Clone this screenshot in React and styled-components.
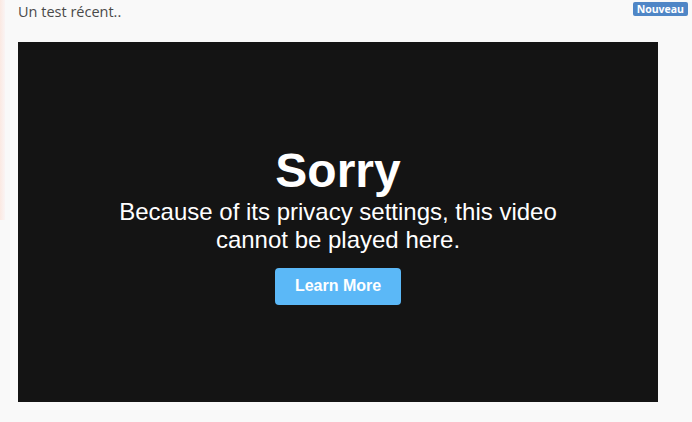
import React from 'react';
import styled, { createGlobalStyle } from 'styled-components';

const GlobalStyle = createGlobalStyle`
  html, body {
    margin: 0;
    padding: 0;
    background: #f9f9f9;
  }
`;

const Page = styled.div`
  position: relative;
  width: 692px;
  height: 422px;
  overflow: hidden;
  background: #f9f9f9;
  font-family: 'Open Sans', 'Liberation Sans', sans-serif;
`;

const EdgeGlow = styled.div`
  position: absolute;
  left: 0;
  top: 0;
  width: 5px;
  height: 220px;
  background: linear-gradient(to right, #fbe9e2, #faf4f4);
`;

const Header = styled.div`
  display: flex;
  align-items: flex-start;
  justify-content: space-between;
  padding: 2px 4px 0 18px;
  height: 42px;
  box-sizing: border-box;
`;

const Title = styled.span`
  font-size: 14.5px;
  line-height: 20px;
  color: #4a4a4a;
`;

const Badge = styled.span`
  background: #4f86c6;
  color: #fff;
  font-size: 10.5px;
  font-weight: 700;
  line-height: 14px;
  padding: 0 4px;
  border-radius: 2px;
`;

const Player = styled.div`
  margin-left: 18px;
  width: 640px;
  height: 360px;
  background: #141414;
  display: flex;
  flex-direction: column;
  align-items: center;
  justify-content: center;
  font-family: 'Liberation Sans', Arial, sans-serif;
  color: #fff;
  text-align: center;
`;

const Heading = styled.div`
  font-size: 48px;
  font-weight: 700;
  line-height: 54px;
  margin-top: 4px;
`;

const Message = styled.div`
  font-size: 24px;
  line-height: 28px;
  width: 480px;
`;

const LearnButton = styled.button`
  margin-top: 14px;
  width: 126px;
  height: 37px;
  border: none;
  border-radius: 4px;
  background: #5bb8f7;
  color: #fff;
  font-family: 'Liberation Sans', Arial, sans-serif;
  font-size: 16px;
  font-weight: 700;
`;

export default function App() {
  return (
    <>
      <GlobalStyle />
      <Page>
        <EdgeGlow />
        <Header>
          <Title>Un test récent..</Title>
          <Badge>Nouveau</Badge>
        </Header>
        <Player>
          <Heading>Sorry</Heading>
          <Message>Because of its privacy settings, this video cannot be played here.</Message>
          <LearnButton>Learn More</LearnButton>
        </Player>
      </Page>
    </>
  );
}
